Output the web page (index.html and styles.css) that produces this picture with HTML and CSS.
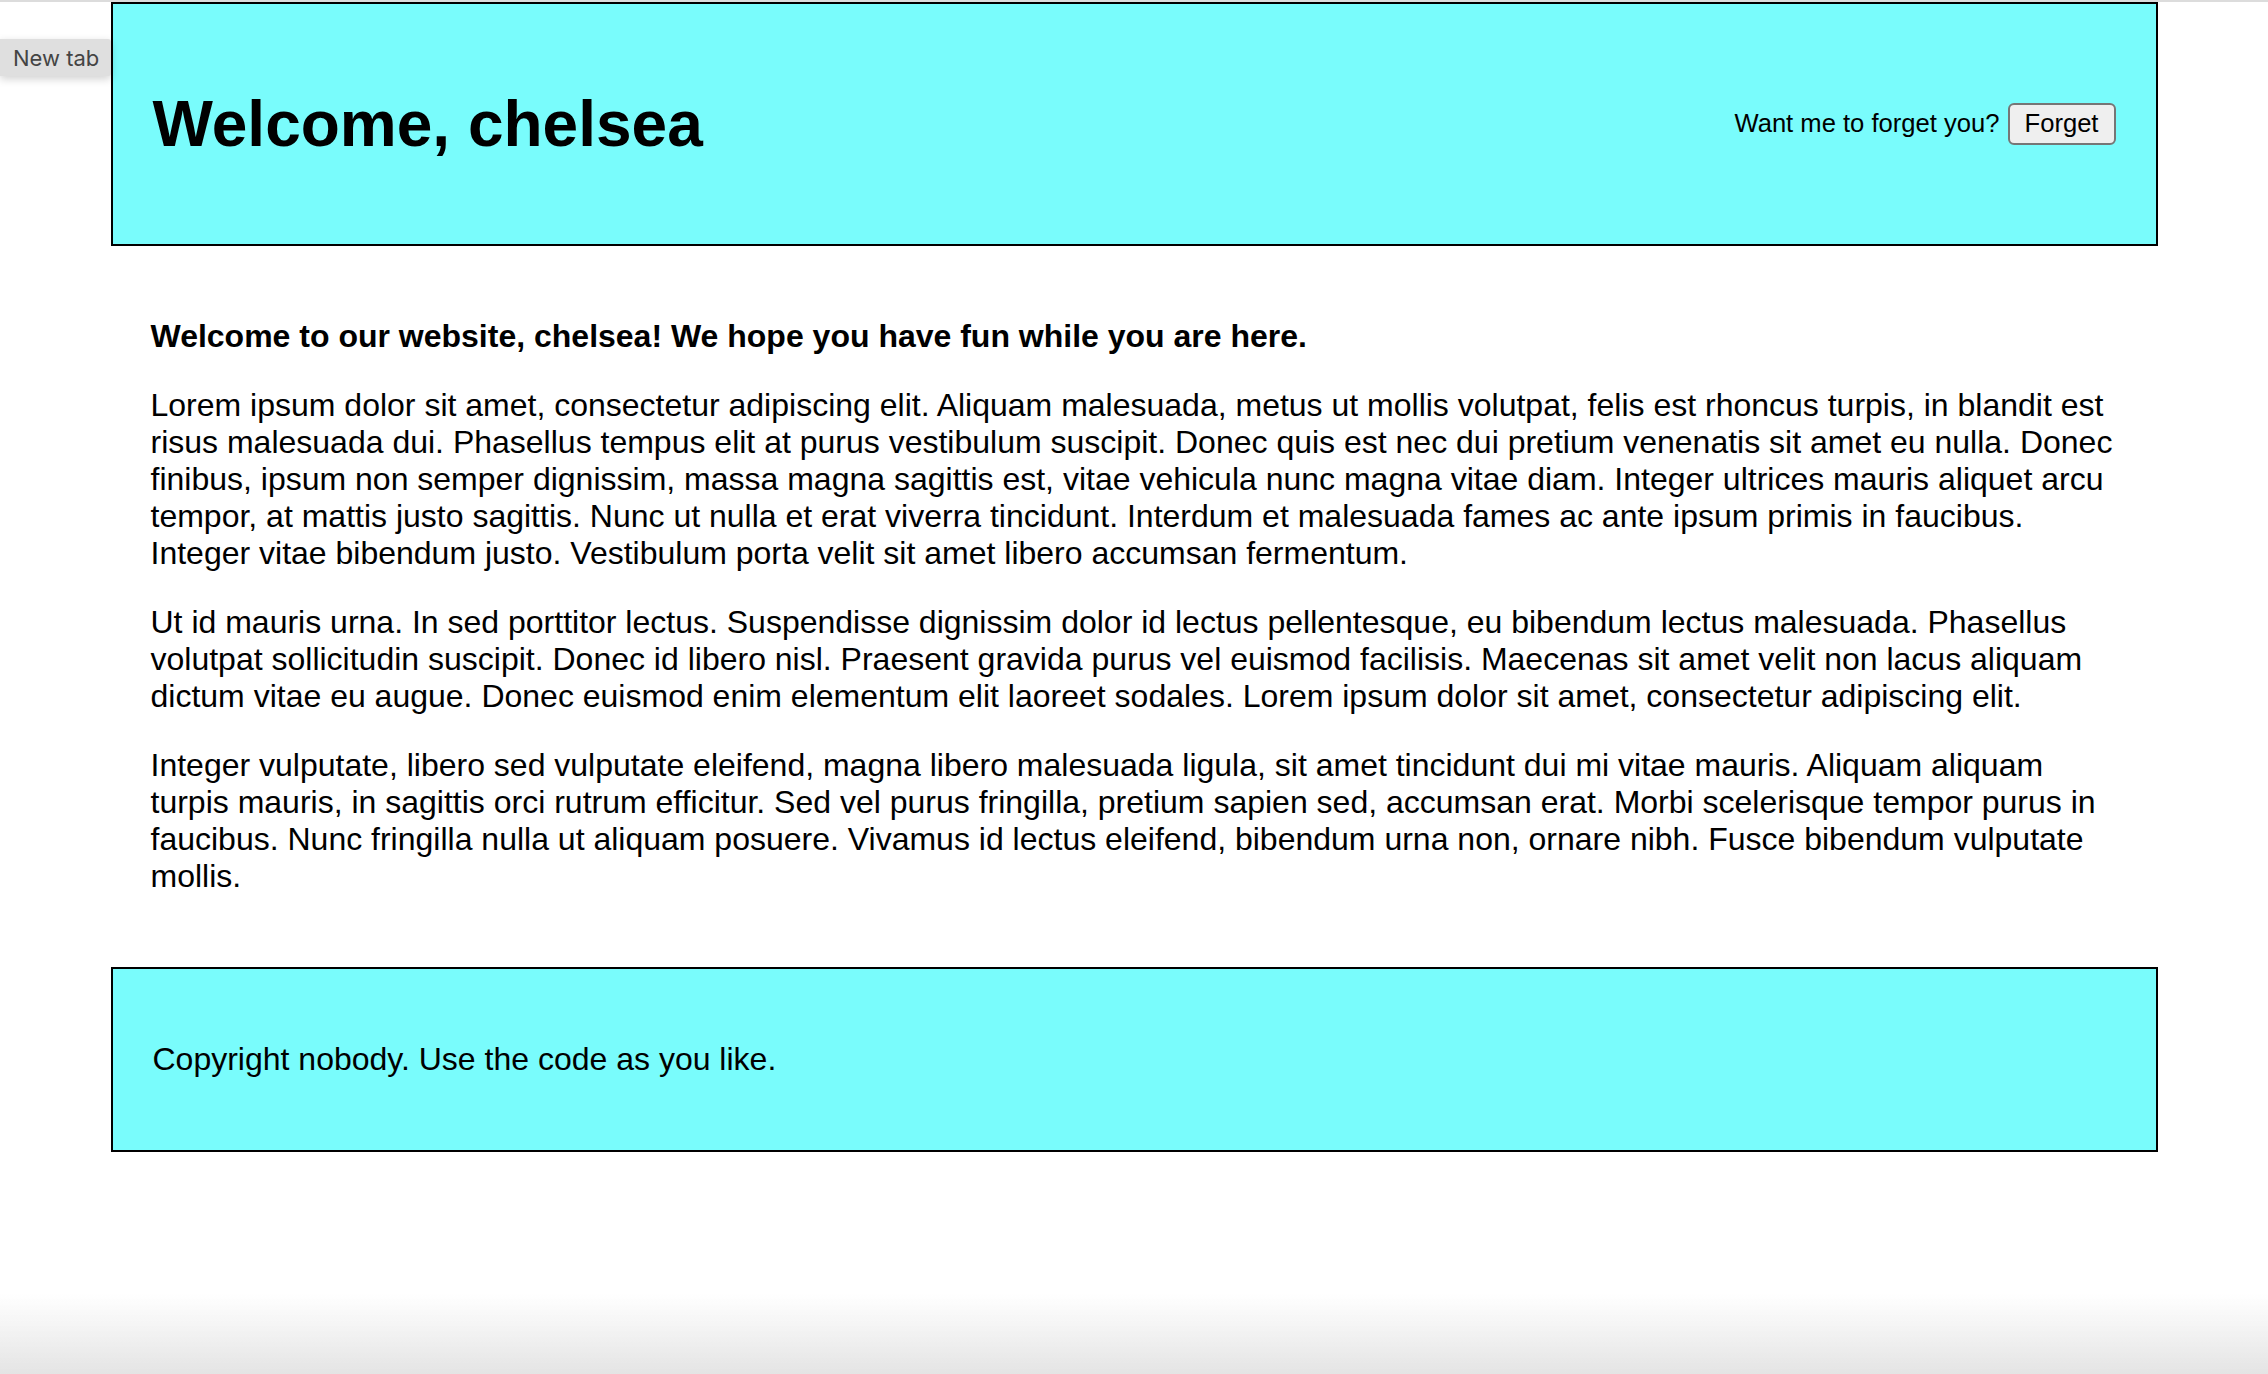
FILE: index.html
```html
<!DOCTYPE html>
<html lang="en">
<head>
<meta charset="utf-8">
<title>Welcome</title>
<link rel="stylesheet" href="styles.css">
</head>
<body>
<div class="top-edge"></div>
<div class="page">
  <header class="site-header">
    <h1 class="title">Welcome, chelsea</h1>
    <div class="forget">
      <span class="forget-label">Want me to forget you?</span>
      <button class="forget-btn" type="button">Forget</button>
    </div>
  </header>
  <main class="content">
    <p class="lead">Welcome to our website, chelsea! We hope you have fun while you are here.</p>
    <p>Lorem ipsum dolor sit amet, consectetur adipiscing elit. Aliquam malesuada, metus ut mollis volutpat, felis est rhoncus turpis, in blandit est risus malesuada dui. Phasellus tempus elit at purus vestibulum suscipit. Donec quis est nec dui pretium venenatis sit amet eu nulla. Donec finibus, ipsum non semper dignissim, massa magna sagittis est, vitae vehicula nunc magna vitae diam. Integer ultrices mauris aliquet arcu tempor, at mattis justo sagittis. Nunc ut nulla et erat viverra tincidunt. Interdum et malesuada fames ac ante ipsum primis in faucibus. Integer vitae bibendum justo. Vestibulum porta velit sit amet libero accumsan fermentum.</p>
    <p>Ut id mauris urna. In sed porttitor lectus. Suspendisse dignissim dolor id lectus pellentesque, eu bibendum lectus malesuada. Phasellus volutpat sollicitudin suscipit. Donec id libero nisl. Praesent gravida purus vel euismod facilisis. Maecenas sit amet velit non lacus aliquam dictum vitae eu augue. Donec euismod enim elementum elit laoreet sodales. Lorem ipsum dolor sit amet, consectetur adipiscing elit.</p>
    <p>Integer vulputate, libero sed vulputate eleifend, magna libero malesuada ligula, sit amet tincidunt dui mi vitae mauris. Aliquam aliquam turpis mauris, in sagittis orci rutrum efficitur. Sed vel purus fringilla, pretium sapien sed, accumsan erat. Morbi scelerisque tempor purus in faucibus. Nunc fringilla nulla ut aliquam posuere. Vivamus id lectus eleifend, bibendum urna non, ornare nibh. Fusce bibendum vulputate mollis.</p>
  </main>
  <footer class="site-footer">
    <p>Copyright nobody. Use the code as you like.</p>
  </footer>
</div>
<div class="tooltip">New tab</div>
<div class="window-fade"></div>
</body>
</html>
```

FILE: styles.css
```css
html, body {
  margin: 0;
  padding: 0;
  background: #ffffff;
}

body {
  font-family: "Liberation Sans", Arial, Helvetica, sans-serif;
  font-size: 32px;
  color: #000000;
  min-height: 1374px;
}

.top-edge {
  height: 2px;
  background: #dcdcdc;
}

.page {
  max-width: 2047px;
  margin: 0 auto;
}

.site-header {
  display: flex;
  align-items: center;
  justify-content: space-between;
  background: #79fcfc;
  border: 2px solid #000000;
  padding: 40px;
}

.title {
  margin: 42.88px 0;
  font-size: 64px;
  font-weight: bold;
}

.forget {
  display: flex;
  align-items: center;
  gap: 8px;
  font-size: 25.6px;
}

.forget-btn {
  font-family: inherit;
  font-size: 25.6px;
  color: #000000;
  background: #efefef;
  border: 2px solid #767676;
  border-radius: 6px;
  height: 42px;
  padding: 0 15px;
}

.content {
  padding: 40px;
}

.content p {
  margin: 32px 0;
}

.lead {
  font-weight: bold;
}

.site-footer {
  background: #79fcfc;
  border: 2px solid #000000;
  padding: 40px;
}

.site-footer p {
  margin: 32px 0;
}

.tooltip {
  position: absolute;
  left: 0;
  top: 39px;
  width: 98px;
  height: 37px;
  padding-left: 13px;
  display: flex;
  align-items: center;
  background: #dfdfdf;
  color: #444444;
  font-family: Inter, "Liberation Sans", sans-serif;
  font-size: 22px;
  border-radius: 0 3px 3px 0;
  box-shadow: 0 3px 8px rgba(0, 0, 0, 0.18);
}

.window-fade {
  position: fixed;
  left: 0;
  right: 0;
  bottom: 0;
  height: 80px;
  background: linear-gradient(to bottom, rgba(255, 255, 255, 0), #e4e4e4);
  pointer-events: none;
}
```
